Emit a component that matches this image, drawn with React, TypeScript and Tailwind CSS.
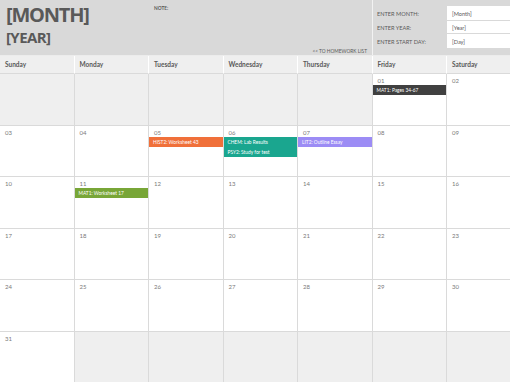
import React from "react";

type Ev = { text: string; color: string };

const days = ["Sunday", "Monday", "Tuesday", "Wednesday", "Thursday", "Friday", "Saturday"];

const events: Record<number, Ev[]> = {
  1: [{ text: "MAT1: Pages 34-67", color: "bg-[#404040]" }],
  5: [{ text: "HIST2: Worksheet 43", color: "bg-[#f0703a]" }],
  6: [
    { text: "CHEM: Lab Results", color: "bg-[#1aa68f]" },
    { text: "PSY2: Study for test", color: "bg-[#1aa68f]" },
  ],
  7: [{ text: "LIT2: Outline Essay", color: "bg-[#9c8cf5]" }],
  11: [{ text: "MAT1: Worksheet 17", color: "bg-[#78a637]" }],
};

function Cell({ day }: { day: number | null }) {
  if (day === null) {
    return <div className="h-[51.5px] border-r border-b border-[#dadada] bg-[#efefef]" />;
  }
  const evs = events[day] || [];
  return (
    <div className="h-[51.5px] border-r border-b border-[#dadada] bg-white flex flex-col">
      <div className="pl-[5px] pt-[3px] h-[11px] text-[6px] leading-[8px] text-[#7a7a7a]">
        {String(day).padStart(2, "0")}
      </div>
      {evs.map((e, i) => (
        <div
          key={i}
          className={`${e.color} h-[10px] pl-[4px] text-[4.8px] leading-[10px] text-white`}
        >
          {e.text}
        </div>
      ))}
    </div>
  );
}

export default function App() {
  const cells: (number | null)[] = [];
  for (let i = 0; i < 5; i++) cells.push(null);
  for (let d = 1; d <= 31; d++) cells.push(d);
  while (cells.length < 42) cells.push(null);

  return (
    <div
      className="w-[510px] h-[382px] overflow-hidden bg-white text-[#595959]"
      style={{ fontFamily: "Lato, 'Open Sans', sans-serif" }}
    >
      <div className="w-[522px]">
        {/* Top area */}
        <div className="flex h-[55px] bg-[#d9d9d9]">
          <div className="w-[372px] flex">
            <div
              className="w-[154px] pl-[6px] pt-[4px] flex flex-col gap-[3px]"
              style={{ fontFamily: "'Open Sans', sans-serif" }}
            >
              <div className="text-[20px] leading-[22px] font-bold tracking-[-1.2px] text-[#595959]">[MONTH]</div>
              <div className="text-[15px] leading-[17px] font-bold tracking-[-0.6px] text-[#595959]">[YEAR]</div>
            </div>
            <div className="flex-1 flex flex-col justify-between pt-[5px] pb-[1px] pr-[5px]">
              <div className="text-[4.8px] font-bold leading-[6px]">NOTE:</div>
              <div className="text-[4.8px] leading-[6px] self-end">&lt;&lt; TO HOMEWORK LIST</div>
            </div>
          </div>
          <div className="w-px bg-[#f2f2f2]" />
          <div className="flex-1 pt-[6px] flex flex-col gap-px">
            {[
              ["ENTER MONTH:", "[Month]", "h-[14px]"],
              ["ENTER YEAR:", "[Year]", "h-[12px]"],
              ["ENTER START DAY:", "[Day]", "h-[14px]"],
            ].map(([l, v, h]) => (
              <div key={l} className={`flex ${h} items-center`}>
                <div className="w-[74px] pl-[4px] text-[5.6px] leading-[7px]">{l}</div>
                <div className="flex-1 h-full bg-white flex items-center pl-[5px] text-[5.6px] leading-[7px]">
                  {v}
                </div>
              </div>
            ))}
          </div>
        </div>
        {/* Day header */}
        <div className="grid grid-cols-[repeat(7,74.5px)] h-[19px] border-t border-[#ececec]">
          {days.map((d) => (
            <div
              key={d}
              className="bg-[#efefef] border-r border-white border-b border-b-[#dadada] pl-[5px] pt-[1px] flex items-center text-[6.5px] font-bold"
            >
              {d}
            </div>
          ))}
        </div>
        {/* Grid */}
        <div className="grid grid-cols-[repeat(7,74.5px)]">
          {cells.map((d, i) => (
            <Cell key={i} day={d} />
          ))}
        </div>
      </div>
    </div>
  );
}
